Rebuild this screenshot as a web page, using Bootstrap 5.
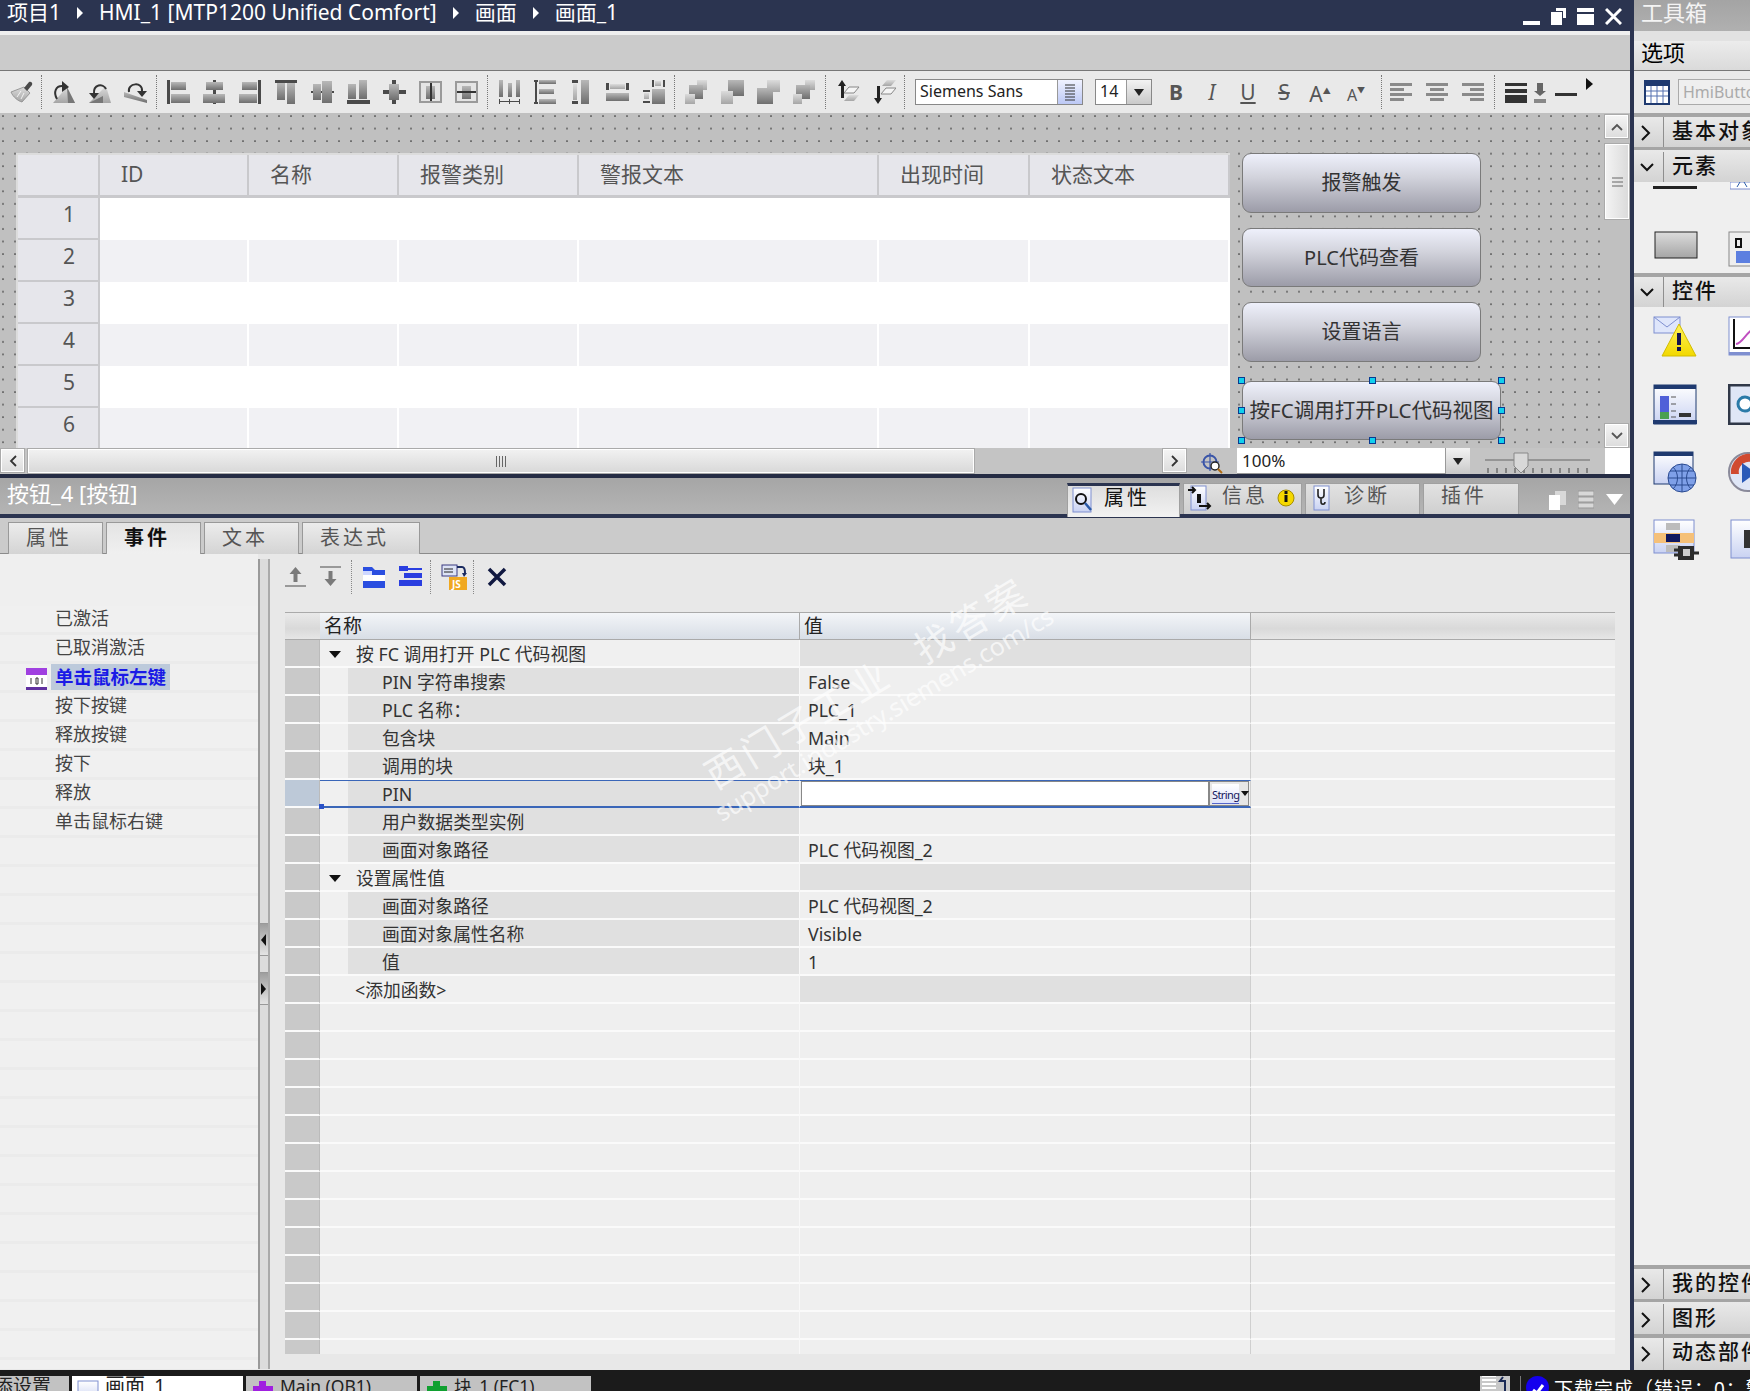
<!DOCTYPE html>
<html lang="en">
<head>
<meta charset="UTF-8">
<title>TIA Portal</title>
<link rel="stylesheet" href="https://cdn.jsdelivr.net/npm/bootstrap@5.3.0/dist/css/bootstrap.min.css">
<style>
:root { --navy: #2b3450; }
html, body { margin: 0; height: 100%; overflow: hidden; background: #e8e8e8; }
body, button, input { font-family: "Noto Sans", "Noto Sans CJK SC", sans-serif; color: #222; }
.app-wrap { width: 1750px; height: 1391px; }
.main-area { height: 1370px; }
.left-col { width: 1630px; }
.title-bar { height: 31px; background: var(--navy); color: #fff; font-size: 21px; line-height: 25px; padding: 0 0 6px 7px; flex: none; }
.crumb-arrow { width: 0; height: 0; border-left: 6px solid #fff; border-top: 6px solid transparent; border-bottom: 6px solid transparent; margin: 0 16px; }
.win-btns { margin-left: auto; padding-right: 8px; gap: 11px; padding-top: 6px; }
.menu-band { height: 40px; flex: none; background: #cbcbcb; border-top: 4px solid #efefef; border-bottom: 1px solid #777; }
.tool-row { height: 42px; flex: none; background: #e9e9e9; padding-left: 10px; }
.tool-row svg { flex: none; }
.tb-group { gap: 12px; }
.tb-sep { width: 1px; height: 34px; border-left: 1px dotted #777; margin: 0 10px 0 8px; flex: none; }
.sep-tight { margin: 0 8px 0 7px; }
.combo-box { height: 26px; background: #fff; border: 1px solid #888; font-size: 16px; line-height: 22px; padding-left: 4px; flex: none; }
.combo-font { width: 168px; }
.combo-size { width: 57px; margin-left: 12px; }
.combo-arrow { margin-left: auto; width: 25px; height: 24px; background: linear-gradient(#f3f3f3, #c9c9c9); border-left: 1px solid #999; }
.combo-list { background: linear-gradient(#f0f2ff, #bcc8f5); }
.arrow-down { width: 0; height: 0; border-top: 7px solid #222; border-left: 5px solid transparent; border-right: 5px solid transparent; }
.fmt-txt { width: 36px; text-align: center; font-size: 21px; line-height: 28px; color: #555; flex: none; }
.fmt-first { margin-left: 6px; }
.fmt-small { font-size: 16px; }
.fmt-arr { font-size: 8px; vertical-align: 8px; }
.canvas-row { height: 335px; flex: none; overflow: hidden; background: #c0c0c0; }
.canvas-dots { width: 1604px; padding: 40px 0 0 16px; gap: 12px;
  background-image: radial-gradient(circle at 1px 1px, #333 .5px, transparent .9px); background-size: 12px 12.55px; background-position: 2px 2px; }
.hmi-table { table-layout: fixed; border-collapse: separate; border-spacing: 0; width: 1214px; flex: none; align-self: flex-start; background: #fff; border-left: 2px solid #dcdcdc; border-top: 2px solid #dcdcdc; }
.hmi-table th { height: 43px; background: #e6e6eb; font-weight: 400; font-size: 21px; color: #555; padding: 0 0 0 21px; border-right: 2px solid #c9c9cc; border-bottom: 3px solid #c9c9cc; }
.hmi-table td { height: 42px; padding: 0; background: #fff; }
.hmi-table tr.alt td { background: #f1f1f4; border-right: 2px solid #fff; }
.hmi-table td.row-no, .hmi-table tr.alt td.row-no { background: #e6e6eb; color: #555; font-size: 21px; text-align: center; padding: 0 0 6px 22px; border-right: 2px solid #c9c9cc; border-bottom: 2px solid #c9c9cc; }
.hmi-btns { width: 262px; flex: none; }
.hmi-btn { width: 239px; height: 60px; padding: 0; margin-bottom: 15px; background: linear-gradient(#eef0fb, #d2d3dc 40%, #9c9ca8); border: 1px solid #7a7a7a; border-radius: 9px; font-size: 20px; color: #333; }
.hmi-short { height: 59px; }
.hmi-sel { width: 259px; height: 59px; margin: 19px 0 0; position: relative; font-size: 20.5px; }
.sel-handle { position: absolute; width: 7px; height: 7px; background: #10d0ee; border: 1px solid #0a3a90; }
.hd-l { left: -5px; } .hd-c { left: 126px; } .hd-r { right: -5px; }
.hd-t { top: -5px; } .hd-m { top: 25px; } .hd-b { bottom: -5px; }
.v-scroll { width: 26px; margin-left: auto; flex: none; padding-top: 1px; background: #c0c0c0; }
.scroll-btn { width: 25px; height: 25px; background: linear-gradient(#f5f5f5, #dcdcdc); border: 1px solid #aaa; outline: 1px solid #fff; outline-offset: -2px; flex: none; }
.v-thumb { height: 77px; margin-top: 4px; background: linear-gradient(90deg, #f4f4f4, #dadada); border: 1px solid #aaa; outline: 1px solid #fff; outline-offset: -2px; }
.h-bar { height: 26px; flex: none; background: #c4c4c4; }
.h-thumb { width: 948px; margin-left: 2px; background: linear-gradient(#f2f2f2, #d8d8d8); border: 1px solid #aaa; outline: 1px solid #fff; outline-offset: -2px; }
.grip-lines { width: 10px; height: 11px; background: repeating-linear-gradient(90deg, #666 0 1px, transparent 1px 3px); }
.mag-ic { margin-left: 13px; flex: none; }
.zoom-combo { width: 233px; margin-left: 11px; flex: none; background: #fff; font-size: 17px; line-height: 26px; padding-left: 5px; border-bottom: 1px solid #999; }
.zoom-combo .combo-arrow { height: 26px; }
.zoom-slider { width: 105px; margin-left: 15px; flex: none; }
.corner-white { width: 25px; margin-left: 15px; flex: none; background: #fff; }
.panel-head { height: 44px; flex: none; border-top: 4px solid #252c44; border-bottom: 4px solid var(--navy); background: linear-gradient(#a6a6a6, #b4b4b4); color: #fff; font-size: 22px; line-height: 30px; padding-left: 7px; }
.ptab-row { margin-left: auto; margin-right: 7px; gap: 3px; height: 31px; margin-top: 5px; }
.ptab { height: 31px; background: linear-gradient(#e2e2e2, #cfcfcf); border: 1px solid #a0a0a0; border-bottom: 0; font-size: 20px; letter-spacing: 3px; color: #555; line-height: 24px; flex: none; padding-left: 3px; gap: 9px; white-space: nowrap; }
.ptab span, .ptab svg { flex: none; }
.ptab-on { width: 113px; height: 34px; background: linear-gradient(#dedede, #f2f2f2); border-top: 3px solid var(--navy); color: #111; position: relative; z-index: 2; }
.ptab-info { width: 119px; }
.ptab-diag { width: 115px; padding-left: 6px; gap: 12px; }
.ptab-plug { width: 96px; padding-left: 17px; }
.head-tools { gap: 12px; margin-left: 27px; margin-top: 2px; }
.sub-tabs { height: 36px; flex: none; background: #cbcbcb; border-bottom: 1px solid #8b8b8b; padding: 4px 0 0 8px; gap: 3px; }
.sub-tab { width: 95px; height: 32px; background: linear-gradient(#ececec, #d4d4d4); border: 1px solid #999; border-bottom: 0; padding-left: 17px; font-size: 20px; letter-spacing: 3px; line-height: 30px; color: #555; }
.sub-tab-on { height: 33px; background: linear-gradient(#e4e4e4, #f0f0f0); color: #111; font-weight: 700; position: relative; }
.sub-tab-wide { width: 118px; }
.props-body { height: 815px; }
.evt-list { width: 258px; flex: none; padding-top: 52px; background: repeating-linear-gradient(#f0f0f0 0 26px, #ebebeb 26px 29px); background-position: 0 52px; background-size: 100% 29px; background-repeat: repeat-y; position: relative; font-size: 18px; }
.evt-top { position: absolute; left: 0; right: 0; top: 0; height: 52px; background: #efefef; }
.evt-item { height: 29px; padding-left: 55px; line-height: 25px; color: #444; position: relative; }
.evt-on { padding-left: 26px; gap: 4px; color: #1a1ae6; font-weight: 700; }
.evt-on span { background: #bdcadb; padding: 0 4px; line-height: 26px; height: 26px; font-size: 18.500px; }
.splitter { width: 12px; flex: none; margin-top: 5px; background: #dcdcdc; border-left: 2px solid #9a9a9a; border-right: 2px solid #aaa; }
.split-knob { height: 33px; background: linear-gradient(#9e9e9e, #e4e4e4); border-top: 1px solid #999; border-bottom: 1px solid #999; }
.knob-one { margin-top: 364px; }
.knob-two { margin-top: 16px; }
.knob-left { width: 0; height: 0; border-right: 5px solid #111; border-top: 6px solid transparent; border-bottom: 6px solid transparent; margin-left: 1px; }
.knob-right { width: 0; height: 0; border-left: 5px solid #111; border-top: 6px solid transparent; border-bottom: 6px solid transparent; margin-left: 1px; }
.grid-side { padding-left: 15px; width: 1360px; }
.grid-tools { height: 58px; flex: none; padding-top: 8px; padding-bottom: 20px; }
.grid-tools svg { flex: none; }
.grid-sep { width: 1px; height: 34px; border-left: 1px dotted #888; flex: none; }
.gap-14 { margin-left: 14px; } .gap-10 { margin-left: 10px; } .gap-12 { margin-left: 12px; } .gap-8 { margin-left: 8px; } .gap-6 { margin-left: 6px; } .gap-13 { margin-left: 13px; }
.grid-wrap { width: 1330px; height: 742px; flex: none; overflow: hidden; }
.prop-grid { table-layout: fixed; width: 1330px; border-collapse: separate; border-spacing: 0; font-size: 17.800px; color: #333; }
.prop-grid th { height: 28px; padding: 0 0 0 4px; font-weight: 400; font-size: 19px; line-height: 24px; background: linear-gradient(#f3f5f8, #d8dee6); border-top: 1px solid #aaa; border-bottom: 1px solid #aaa; border-right: 1px solid #aaa; color: #222; }
.prop-grid th.grey-head { background: linear-gradient(#e9e9e9, #d9d9d9 60%, #e6e6e6); border-right: 0; }
.prop-grid td { height: 28px; padding: 1px 0 0; border-bottom: 2px solid #fafafa; background: #efefef; line-height: 24px; white-space: nowrap; }
.prop-grid td.r-head { background: #c9c9c9; border-right: 1px solid #bbb; }
.prop-grid td.c-name { padding-left: 62px; background: linear-gradient(90deg, #f0f0f0 28px, #e0e0e0 28px); border-right: 1px solid #f8f8f8; }
.prop-grid td.c-val { padding-left: 8px; border-right: 1px solid #cfcfcf; }
.prop-grid td.c-rest { background: #eeeeee; }
.prop-grid tr.group td.c-name { background: #f0f0f0; padding-left: 9px; }
.prop-grid tr.group td.c-val { background: #e0e0e0; }
.prop-grid tr.blank td.c-name { background: #efefef; }
.prop-grid td.c-name .tri { display: inline-block; width: 0; height: 0; border-top: 7px solid #111; border-left: 6px solid transparent; border-right: 6px solid transparent; margin: 0 15px 3px 0; }
.prop-grid tr.add-row td.c-name { padding-left: 35px; }
.prop-grid tr.pin-row td.r-head { background: #bdc9d8; }
.prop-grid tr.pin-row td.c-name, .prop-grid tr.pin-row td.c-val { border-top: 1px solid #3a66b8; border-bottom: 2px solid #3a66b8; padding-top: 0; position: relative; }
.prop-grid tr.pin-row td.c-val { padding: 0 1px; background: #efefef; }
.pin-box { height: 25px; gap: 0; }
.pin-input { flex: 1; border: 1px solid #888; height: 25px; background: #fff; padding: 0; outline: 0; }
.type-btn { width: 40px; height: 25px; border: 1px solid #888; background: #e6e6e6; font-size: 11px; letter-spacing: -.6px; line-height: 22px; color: #14145a; padding-left: 2px; gap: 2px; }
.type-btn span { background: linear-gradient(#fff, #dfe4fb); border-bottom: 1px solid #5566cc; height: 20px; }
.arrow-small { width: 0; height: 0; border-top: 5px solid #111; border-left: 4px solid transparent; border-right: 4px solid transparent; }
.pin-mark { position: absolute; width: 5px; height: 5px; background: #2a52c8; left: -1px; bottom: -3px; }
.water-mark { position: absolute; transform: translate(-50%, -50%) rotate(-31deg); color: rgba(255, 255, 255, .68); white-space: nowrap; pointer-events: none; z-index: 5; }
.wm-one { left: 798px; top: 724px; font-size: 38px; letter-spacing: 4px; }
.wm-two { left: 971px; top: 620px; font-size: 38px; letter-spacing: 4px; }
.wm-three { left: 884px; top: 714px; font-size: 25px; }
.right-col { width: 120px; flex: none; border-left: 4px solid var(--navy); background: #efefef; overflow: hidden; }
.rp-title { height: 31px; flex: none; background: linear-gradient(#a4a4a4, #b0b0b0); color: #f4f4f4; font-size: 22px; line-height: 24px; padding-left: 7px; white-space: nowrap; }
.rp-gap { height: 10px; flex: none; background: #e2e2e2; }
.rp-opts { height: 30px; flex: none; background: linear-gradient(#ececec, #dadada); border-bottom: 1px solid #777; font-size: 22px; line-height: 22px; padding-left: 7px; color: #000; }
.rp-tools { height: 42px; flex: none; background: #e9e9e9; padding-left: 10px; gap: 8px; }
.rp-tools svg { flex: none; }
.rp-input { width: 120px; height: 26px; flex: none; border: 1px solid #aaa; font-size: 16px; color: #aaa; line-height: 24px; padding-left: 4px; background: #efefef; }
.acc-row { height: 34px; flex: none; background: linear-gradient(#e9e9e9, #d3d3d3); border-top: 4px solid #a5a5a5; font-size: 21px; font-weight: 500; line-height: 26px; color: #111; white-space: nowrap; letter-spacing: 2px; }
.acc-mid { height: 35px; border-top-width: 3px; padding-top: 2px; }
.acc-last { height: 36px; }
.acc-chev { width: 30px; flex: none; border-right: 1px solid #8e8e8e; padding-left: 6px; }
.acc-label { padding-left: 8px; }
.rp-pane { background: #efefef; overflow: hidden; flex: none; }
.pane-elem { height: 91px; }
.pane-ctrl { height: 958px; padding-top: 9px; }
.icon-rows { gap: 26px; padding-left: 19px; }
.icon-line { gap: 30px; }
.icon-line svg { flex: none; }
.pane-elem svg { flex: none; }
.pane-elem .elem-top { height: 8px; gap: 33px; padding-left: 19px; overflow: hidden; }
.pane-elem .elem-low { gap: 30px; padding: 41px 0 0 20px; }
.status-strip { height: 21px; flex: none; background: #1b1b1b; overflow: hidden; color: #fff; font-size: 17.500px; padding-top: 6px; }
.st-tab { width: 171px; height: 26px; flex: none; margin-right: 3px; background: #c2c2c2; color: #222; line-height: 20px; padding-left: 6px; gap: 6px; white-space: nowrap; }
.st-tab svg { flex: none; }
.st-first { width: 69px; padding-left: 0; justify-content: flex-end; padding-right: 18px; font-size: 19px; }
.st-on { background: #fff; font-size: 20px; padding-left: 5px; }
.st-right { margin-left: auto; width: 270px; height: 20px; gap: 5px; color: #fff; font-size: 19px; line-height: 26px; white-space: nowrap; overflow: hidden; letter-spacing: 1px; }
.st-pic { width: 30px; height: 16px; flex: none; background: #c8c8c8; margin-top: -1px; }
.st-div { width: 1px; height: 26px; background: #777; margin: -6px 0 0 5px; flex: none; }
.st-dot { width: 23px; height: 23px; border-radius: 50%; background: #1400ee; flex: none; }
</style>
</head>
<body>
<svg width="0" height="0" class="position-absolute">
  <defs>
    <linearGradient id="tg" x1="0" y1="0" x2="0" y2="1"><stop offset="0" stop-color="#b8b8b8"/><stop offset="1" stop-color="#6e6e6e"/></linearGradient>
    <linearGradient id="tg2" x1="0" y1="0" x2="0" y2="1"><stop offset="0" stop-color="#dcdcdc"/><stop offset="1" stop-color="#a5a5a5"/></linearGradient>
    <linearGradient id="pg" x1="0" y1="0" x2="0" y2="1"><stop offset="0" stop-color="#ffffff"/><stop offset="1" stop-color="#c9d2f2"/></linearGradient>
    <linearGradient id="yl" x1="0" y1="0" x2="0" y2="1"><stop offset="0" stop-color="#fff35a"/><stop offset="1" stop-color="#f2d800"/></linearGradient>
  </defs>
</svg>

<div class="app-wrap position-relative d-flex flex-column">
  <div class="main-area d-flex">
    <div class="left-col d-flex flex-column">

      <div class="title-bar d-flex align-items-center">
        <span>项目1</span><i class="crumb-arrow"></i><span>HMI_1 [MTP1200 Unified Comfort]</span><i class="crumb-arrow"></i><span>画面</span><i class="crumb-arrow"></i><span>画面_1</span>
        <div class="win-btns d-flex align-items-center">
          <svg width="17" height="18"><rect y="14" width="17" height="4" fill="#fff"/></svg>
          <svg width="15" height="18"><rect x="5" y="1" width="10" height="3" fill="#fff"/><rect x="12" y="1" width="3" height="10" fill="#fff"/><rect y="5" width="11" height="13" fill="#fff"/></svg>
          <svg width="17" height="18"><rect y="1" width="17" height="4" fill="#fff"/><rect y="7" width="17" height="11" fill="#fff"/></svg>
          <svg width="17" height="18"><path d="M1 2 L16 17 M16 2 L1 17" stroke="#fff" stroke-width="3"/></svg>
        </div>
      </div>
      <div class="menu-band"></div>

      <div class="tool-row d-flex align-items-center" id="toolRow">
        <div id="toolIcons" class="d-flex align-items-center"></div>
        <div class="tb-sep"></div>
        <div class="combo-box combo-font d-flex">Siemens Sans<div class="combo-arrow combo-list d-flex align-items-center justify-content-center"><svg width="12" height="17"><path d="M1 1h10M1 4h10M1 7h10M1 10h10M1 13h10M1 16h10" stroke="#333" stroke-width="1.2"/></svg></div></div>
        <div class="combo-box combo-size d-flex">14<div class="combo-arrow d-flex align-items-center justify-content-center"><i class="arrow-down"></i></div></div>
        <div class="fmt-txt fmt-first fw-bold">B</div>
        <div class="fmt-txt fst-italic">I</div>
        <div class="fmt-txt text-decoration-underline">U</div>
        <div class="fmt-txt text-decoration-line-through">S</div>
        <div class="fmt-txt">A<span class="fmt-arr">▲</span></div>
        <div class="fmt-txt fmt-small">A<span class="fmt-arr">▼</span></div>
        <div class="tb-sep sep-tight"></div>
        <div id="textAlign" class="d-flex tb-group"></div>
        <div class="tb-sep"></div>
        <svg width="24" height="24"><rect y="3" width="22" height="3" fill="#333"/><rect y="9" width="22" height="4" fill="#333"/><rect y="15" width="22" height="8" fill="#333"/></svg>
        <svg width="14" height="24" class="ms-1"><rect x="4" y="3" width="6" height="9" fill="#666"/><path d="M1 11h12l-6 5z" fill="#666"/><rect x="1" y="19" width="12" height="4" fill="#888"/></svg>
        <svg width="22" height="24" class="ms-2"><rect y="13" width="22" height="3" fill="#333"/></svg>
        <svg width="10" height="24" class="ms-2 mb-2"><path d="M1 2l7 6-7 6z" fill="#111"/></svg>
      </div>

      <div class="canvas-row d-flex">
        <div class="canvas-dots d-flex">
          <table class="hmi-table">
            <colgroup><col width="82"><col width="149"><col width="150"><col width="180"><col width="300"><col width="151"><col></colgroup>
            <thead><tr><th></th><th>ID</th><th>名称</th><th>报警类别</th><th>警报文本</th><th>出现时间</th><th>状态文本</th></tr></thead>
            <tbody id="hmiRows"></tbody>
          </table>
          <div class="hmi-btns">
            <button class="btn hmi-btn d-block">报警触发</button>
            <button class="btn hmi-btn hmi-short d-block">PLC代码查看</button>
            <button class="btn hmi-btn d-block">设置语言</button>
            <button class="btn hmi-btn hmi-sel d-block">按FC调用打开PLC代码视图
              <i class="sel-handle hd-l hd-t"></i><i class="sel-handle hd-c hd-t"></i><i class="sel-handle hd-r hd-t"></i>
              <i class="sel-handle hd-l hd-m"></i><i class="sel-handle hd-r hd-m"></i>
              <i class="sel-handle hd-l hd-b"></i><i class="sel-handle hd-c hd-b"></i><i class="sel-handle hd-r hd-b"></i>
            </button>
          </div>
        </div>
        <div class="v-scroll d-flex flex-column">
          <div class="scroll-btn d-flex align-items-center justify-content-center"><svg width="12" height="8"><path d="M1 7l5-5 5 5" fill="none" stroke="#555" stroke-width="1.8"/></svg></div>
          <div class="v-thumb d-flex align-items-center justify-content-center"><svg width="11" height="10"><path d="M0 1h11M0 5h11M0 9h11" stroke="#666"/></svg></div>
          <div class="flex-grow-1"></div>
          <div class="scroll-btn d-flex align-items-center justify-content-center"><svg width="12" height="8"><path d="M1 1l5 5 5-5" fill="none" stroke="#555" stroke-width="1.8"/></svg></div>
        </div>
      </div>

      <div class="h-bar d-flex">
        <div class="scroll-btn d-flex align-items-center justify-content-center"><svg width="8" height="12"><path d="M7 1L2 6l5 5" fill="none" stroke="#333" stroke-width="1.8"/></svg></div>
        <div class="h-thumb d-flex align-items-center justify-content-center"><i class="grip-lines"></i></div>
        <div class="scroll-btn d-flex align-items-center justify-content-center ms-auto"><svg width="8" height="12"><path d="M1 1l5 5-5 5" fill="none" stroke="#333" stroke-width="1.8"/></svg></div>
        <svg width="26" height="26" class="mag-ic"><circle cx="10" cy="14" r="6.5" fill="none" stroke="#3a55a8" stroke-width="2"/><path d="M10 5v18M1 14h18" stroke="#3a55a8" stroke-width="1.2"/><circle cx="15" cy="18" r="4" fill="#fff" stroke="#222" stroke-width="1.4"/><path d="M18 21l4 4" stroke="#b06a10" stroke-width="2"/></svg>
        <div class="zoom-combo d-flex">100%<div class="combo-arrow d-flex align-items-center justify-content-center"><i class="arrow-down"></i></div></div>
        <svg width="105" height="26" class="zoom-slider"><path d="M0 12h105" stroke="#666"/><path d="M3 20v5M12 20v5M21 20v5M30 20v5M39 20v5M48 20v5M57 20v5M66 20v5M75 20v5M84 20v5M93 20v5M102 20v5" stroke="#444"/><path d="M29 5h14v13l-7 7-7-7z" fill="#d8d8d8" stroke="#888"/></svg>
        <div class="corner-white"></div>
      </div>

      <div class="panel-head d-flex">
        <span>按钮_4 [按钮]</span>
        <div class="ptab-row d-flex">
          <div class="ptab ptab-on d-flex">
            <svg width="24" height="28"><rect x="2" y="2" width="18" height="24" fill="url(#pg)" stroke="#7f8fd0"/><circle cx="10" cy="13" r="5" fill="none" stroke="#111" stroke-width="2"/><path d="M14 17l6 7" stroke="#2a5aa8" stroke-width="2.5"/></svg>
            <span>属性</span>
          </div>
          <div class="ptab ptab-info d-flex">
            <svg width="26" height="28"><rect x="4" y="2" width="15" height="24" fill="url(#pg)" stroke="#7f8fd0"/><path d="M1 6h7M5 3l3 3-3 3M12 22h11M20 19l3 3-3 3" stroke="#111" stroke-width="2" fill="none"/><rect x="10" y="10" width="4" height="9" fill="#111"/></svg>
            <span>信息</span>
            <svg width="20" height="28"><circle cx="9" cy="14" r="8" fill="#f5d800" stroke="#a58d00"/><rect x="7.5" y="11" width="3" height="7" fill="#111"/><rect x="7.5" y="7" width="3" height="3" fill="#111"/></svg>
          </div>
          <div class="ptab ptab-diag d-flex">
            <svg width="20" height="28"><rect x="2" y="2" width="15" height="24" fill="url(#pg)" stroke="#7f8fd0"/><path d="M6 5v6c0 4 6 4 6 0V5M9 14v4c0 3 4 3 4 0" fill="none" stroke="#222" stroke-width="1.6"/></svg>
            <span>诊断</span>
          </div>
          <div class="ptab ptab-plug d-flex"><span>插件</span></div>
          <div class="head-tools d-flex align-items-center">
            <svg width="17" height="20"><rect x="6" y="1" width="11" height="14" fill="#d8d8d8"/><rect y="5" width="11" height="15" fill="#fff"/></svg>
            <svg width="16" height="20"><rect y="1" width="16" height="5" fill="#d8d8d8" stroke="#999"/><rect y="7" width="16" height="5" fill="#d8d8d8" stroke="#999"/><rect y="13" width="16" height="5" fill="#d8d8d8" stroke="#999"/></svg>
            <svg width="17" height="12"><path d="M0 0h17l-8.500 11z" fill="#fff"/></svg>
          </div>
        </div>
      </div>

      <div class="sub-tabs d-flex">
        <div class="sub-tab">属性</div>
        <div class="sub-tab sub-tab-on">事件</div>
        <div class="sub-tab">文本</div>
        <div class="sub-tab sub-tab-wide">表达式</div>
      </div>

      <div class="props-body d-flex">
        <div class="evt-list">
          <div class="evt-top"></div>
          <div class="evt-item">已激活</div>
          <div class="evt-item">已取消激活</div>
          <div class="evt-item evt-on d-flex">
            <svg width="21" height="22" class="mt-1"><rect width="21" height="22" fill="#fff"/><rect width="21" height="7" fill="#a040e0"/><rect y="19" width="21" height="3" fill="#6030a0"/><path d="M5 10v6M10 10h2v6h-2zM16 10v6" stroke="#333" fill="none"/></svg>
            <span>单击鼠标左键</span>
          </div>
          <div class="evt-item">按下按键</div>
          <div class="evt-item">释放按键</div>
          <div class="evt-item">按下</div>
          <div class="evt-item">释放</div>
          <div class="evt-item">单击鼠标右键</div>
        </div>
        <div class="splitter">
          <div class="split-knob knob-one d-flex align-items-center"><i class="knob-left"></i></div>
          <div class="split-knob knob-two d-flex align-items-center"><i class="knob-right"></i></div>
        </div>
        <div class="grid-side d-flex flex-column">
          <div class="grid-tools d-flex align-items-center">
            <svg width="21" height="26"><path d="M10.500 3l6 7h-4v8h-4v-8h-4z" fill="#7a7a7a"/><rect y="21" width="21" height="2" fill="#999"/></svg>
            <svg width="21" height="26" class="gap-14"><rect y="2" width="21" height="2" fill="#999"/><path d="M8.500 7h4v8h4l-6 7-6-7h4z" fill="#7a7a7a"/></svg>
            <div class="grid-sep gap-10"></div>
            <svg width="24" height="26" class="gap-10"><path d="M1 3h9l3 3h10v18H1z" fill="#2a4ee0"/><rect x="1" y="11" width="22" height="6" fill="#fff"/><rect x="1" y="7" width="9" height="4" fill="#cfd8ff"/></svg>
            <svg width="24" height="26" class="gap-12"><path d="M1 2h9v5H1zM6 9h18v5H6zM1 16h23v6H1z" fill="#2a3ee0"/><path d="M10 4h14v2H10z" fill="#2a3ee0"/></svg>
            <div class="grid-sep gap-8"></div>
            <svg width="26" height="28" class="gap-10"><rect x="1" y="2" width="15" height="11" fill="#dde3f5" stroke="#3a3a80"/><path d="M3 6h9M3 9h9" stroke="#222"/><path d="M16 4h5c3 0 3 3 3 6" fill="none" stroke="#1a2a60" stroke-width="2"/><path d="M21 10h5l-3 4z" fill="#1a2a60"/><rect x="8" y="14" width="18" height="13" fill="#f0a820"/><text x="11" y="25" font-size="10" font-weight="700" fill="#fff">JS</text></svg>
            <div class="grid-sep gap-6"></div>
            <svg width="20" height="22" class="gap-13"><path d="M2 3l16 16M18 3L2 19" stroke="#101840" stroke-width="3.500"/></svg>
          </div>
          <div class="grid-wrap">
            <table class="prop-grid">
              <colgroup><col width="35"><col width="480"><col width="451"><col></colgroup>
              <thead><tr><th class="grey-head"></th><th>名称</th><th>值</th><th class="grey-head"></th></tr></thead>
              <tbody id="propRows"></tbody>
            </table>
          </div>
        </div>
      </div>
    </div>

    <div class="right-col d-flex flex-column">
      <div class="rp-title">工具箱</div>
      <div class="rp-gap"></div>
      <div class="rp-opts">选项</div>
      <div class="rp-tools d-flex align-items-center">
        <svg width="26" height="26"><rect x="1" y="2" width="24" height="23" fill="#fff" stroke="#1f3a70" stroke-width="2"/><rect x="1" y="2" width="24" height="5" fill="#1f3a70"/><path d="M7 7v17M13 7v17M19 7v17M2 12h22M2 17h22" stroke="#5570b0"/></svg>
        <div class="rp-input">HmiButton</div>
      </div>
      <div class="acc-row d-flex"><div class="acc-chev"><svg width="12" height="24"><path d="M2 6l7 7-7 7" fill="none" stroke="#111" stroke-width="2"/></svg></div><div class="acc-label">基本对象</div></div>
      <div class="acc-row acc-mid d-flex"><div class="acc-chev"><svg width="16" height="24"><path d="M1 9l6 6 6-6" fill="none" stroke="#111" stroke-width="2"/></svg></div><div class="acc-label">元素</div></div>
      <div class="rp-pane pane-elem">
        <div class="elem-top d-flex">
          <svg width="44" height="8"><rect y="4" width="44" height="3" fill="#222"/></svg>
          <svg width="40" height="8"><rect width="30" height="7" fill="#fff" stroke="#7f8fd0"/><path d="M10 0l-3 5M14 0l3 5" stroke="#2a5aa8"/></svg>
        </div>
        <div class="elem-low d-flex">
          <svg width="44" height="28"><rect x="1" y="1" width="42" height="26" fill="url(#tg2)" stroke="#222"/></svg>
          <svg width="40" height="36"><rect x="1" y="1" width="30" height="34" fill="#eee" stroke="#888"/><rect x="8" y="8" width="5" height="8" fill="none" stroke="#111" stroke-width="2"/><rect x="8" y="20" width="22" height="12" fill="#5c7fe0"/></svg>
        </div>
      </div>
      <div class="acc-row d-flex"><div class="acc-chev"><svg width="16" height="24"><path d="M1 9l6 6 6-6" fill="none" stroke="#111" stroke-width="2"/></svg></div><div class="acc-label">控件</div></div>
      <div class="rp-pane pane-ctrl">
        <div class="icon-rows d-flex flex-column">
          <div class="icon-line d-flex">
            <svg width="45" height="42"><rect x="1" y="1" width="26" height="16" fill="#dfe6fb" stroke="#7f8fd0"/><path d="M1 1l13 10L27 1" fill="none" stroke="#7f8fd0"/><path d="M26 8l17 32H9z" fill="url(#yl)" stroke="#d2bc00"/><rect x="24" y="17" width="4" height="12" fill="#141450"/><rect x="24" y="31" width="4" height="4" fill="#141450"/></svg>
            <svg width="40" height="40"><rect x="1" y="1" width="38" height="38" fill="#fff" stroke="#7f8fd0"/><path d="M6 3v29h33" fill="none" stroke="#111" stroke-width="2"/><path d="M8 28c8-1 10-15 26-20" fill="none" stroke="#c050c0" stroke-width="2"/><rect x="1" y="36" width="38" height="3" fill="#7f8fd0"/></svg>
          </div>
          <div class="icon-line d-flex">
            <svg width="45" height="41"><rect x="1" y="1" width="42" height="39" fill="url(#pg)" stroke="#1f3a70"/><rect x="1" y="1" width="42" height="4" fill="#1f3a70"/><rect y="36" width="44" height="4" fill="#1f3a70"/><rect x="7" y="12" width="9" height="16" fill="#5060d8"/><rect x="7" y="28" width="9" height="7" fill="#4aa050"/><path d="M18 13h5M18 20h5M18 27h5M18 33h5" stroke="#555"/><rect x="26" y="29" width="12" height="4" fill="#333"/></svg>
            <svg width="40" height="41"><rect x="1" y="1" width="38" height="39" fill="#dfe6f6" stroke="#303848" stroke-width="3"/><circle cx="17" cy="20" r="7" fill="#fff" stroke="#2a7aa8" stroke-width="3"/></svg>
          </div>
          <div class="icon-line d-flex">
            <svg width="45" height="42"><rect x="1" y="1" width="39" height="32" fill="url(#pg)" stroke="#1f3a70"/><rect x="1" y="1" width="39" height="4" fill="#1f3a70"/><circle cx="29" cy="27" r="14" fill="#7fa0e8" stroke="#2a4a90"/><path d="M15 27h28M29 13v28M20 16c6 6 6 16 0 22M38 16c-6 6-6 16 0 22M17 20h24M17 34h24" stroke="#2a4a90" fill="none"/></svg>
            <svg width="40" height="42"><circle cx="20" cy="21" r="19" fill="#dfe6f6" stroke="#8a8a9a" stroke-width="2"/><path d="M3 23a18 18 0 0 1 20-20v8a10 10 0 0 0-12 12z" fill="#d04a30"/><path d="M14 12l14 10-14 10z" fill="#2a5ab8"/></svg>
          </div>
          <div class="icon-line d-flex">
            <svg width="47" height="42"><rect x="1" y="1" width="40" height="33" fill="url(#pg)" stroke="#7f8fd0"/><rect x="1" y="14" width="40" height="10" fill="#f5c078"/><rect x="13" y="4" width="14" height="7" fill="#bcbcbc"/><rect x="13" y="15" width="14" height="8" fill="#101860"/><rect x="13" y="26" width="14" height="7" fill="#bcbcbc"/><rect x="25" y="27" width="16" height="14" fill="#2c2c2c"/><rect x="30" y="30" width="7" height="7" fill="#ccc"/><path d="M21 31h4M21 36h4M41 34h5" stroke="#2c2c2c" stroke-width="3"/></svg>
            <svg width="40" height="41"><rect x="1" y="1" width="38" height="38" fill="url(#pg)" stroke="#7f8fd0"/><rect x="14" y="11" width="24" height="18" fill="#333"/></svg>
          </div>
        </div>
      </div>
      <div class="acc-row d-flex"><div class="acc-chev"><svg width="12" height="24"><path d="M2 6l7 7-7 7" fill="none" stroke="#111" stroke-width="2"/></svg></div><div class="acc-label">我的控件</div></div>
      <div class="acc-row acc-mid d-flex"><div class="acc-chev"><svg width="12" height="24"><path d="M2 6l7 7-7 7" fill="none" stroke="#111" stroke-width="2"/></svg></div><div class="acc-label">图形</div></div>
      <div class="acc-row acc-last d-flex"><div class="acc-chev"><svg width="12" height="24"><path d="M2 6l7 7-7 7" fill="none" stroke="#111" stroke-width="2"/></svg></div><div class="acc-label">动态部件</div></div>
    </div>
  </div>

  <div class="status-strip d-flex">
    <div class="st-tab st-first d-flex">添设置</div>
    <div class="st-tab st-on d-flex"><svg width="22" height="22" class="mt-1"><rect x="1" y="1" width="20" height="20" fill="url(#pg)" stroke="#7f8fd0"/></svg>画面_1</div>
    <div class="st-tab d-flex"><svg width="22" height="18" class="mt-1"><path d="M1 6h6V1h7v5h7v7H1z" fill="#a020e0"/></svg>Main (OB1)</div>
    <div class="st-tab d-flex"><svg width="22" height="18" class="mt-1"><path d="M1 6h6V1h7v5h7v7H1z" fill="#10a030"/></svg>块_1 (FC1)</div>
    <div class="st-right d-flex">
      <div class="st-pic d-flex"><svg width="30" height="16"><path d="M2 1h14M2 5h14M2 9h14M2 13h14" stroke="#fff" stroke-width="2"/><path d="M25 16V6h-5l3-4" fill="none" stroke="#1b2a55" stroke-width="2"/></svg></div>
      <div class="st-div"></div>
      <div class="st-dot d-flex"><svg width="23" height="23"><path d="M7 14l4 3 6-8" stroke="#fff" stroke-width="3" fill="none"/></svg></div>
      <span>下载完成（错误：0；警告</span>
    </div>
  </div>

  <div class="water-mark wm-one">西门子工业</div>
  <div class="water-mark wm-two">找答案</div>
  <div class="water-mark wm-three">support.industry.siemens.com/cs</div>
</div>

<script src="https://cdn.jsdelivr.net/npm/bootstrap@5.3.0/dist/js/bootstrap.bundle.min.js"></script>
<script>
// small toolbar pictures, each is a list of rects x,y,w,h,fill
const G = 'url(#tg)', L = 'url(#tg2)', D = '#4a4a4a';
function svgRects(list, w) {
    let out = `<svg width="${w || 24}" height="24">`;
    list.forEach(r => { out += `<rect x="${r[0]}" y="${r[1]}" width="${r[2]}" height="${r[3]}" fill="${r[4]}"/>`; });
    return out + '</svg>';
}
const sep = '<div class="tb-sep"></div>';
const brush = '<svg width="23" height="24"><path d="M14 7l6 6-8 9C8 21 3 17 1 12z" fill="url(#tg2)" stroke="#888" stroke-width=".8"/><path d="M14 8l5-6c2-1 4 1 3 3l-5 6z" fill="#4a4a4a"/><path d="M11 11l-4 6M14 13l-3 6" stroke="#fff" stroke-width=".8"/></svg>';
const turn = [
    '<svg width="24" height="24"><path d="M15 7L1 23h22z" fill="url(#tg2)"/><path d="M15 7l8 16h-7z" fill="#777"/><path d="M5 19C1 12 4 6 10 6" fill="none" stroke="#333" stroke-width="2"/><path d="M10 1l7 6-7 5z" fill="#333"/></svg>',
    '<svg width="24" height="24"><path d="M18 6L1 23h22z" fill="url(#tg2)"/><path d="M1 23l14-7v7z" fill="#777"/><path d="M18 9C15 3 5 4 6 14" fill="none" stroke="#333" stroke-width="2"/><path d="M1 13h10l-5 6z" fill="#333"/></svg>',
    '<svg width="24" height="24"><path d="M0 12l23 8v3L0 17z" fill="url(#tg)"/><path d="M5 12C3 3 19 1 18 11" fill="none" stroke="#333" stroke-width="2"/><path d="M13 11h10l-5 6z" fill="#333"/></svg>'
];
const aligns = [
    [[0, 0, 3, 24, D], [4, 2, 15, 8, G], [4, 14, 19, 9, G]],
    [[10, 0, 3, 24, D], [3, 2, 17, 8, G], [0, 14, 22, 9, G]],
    [[19, 0, 3, 24, D], [3, 2, 15, 8, G], [0, 14, 18, 9, G]],
    [[0, 0, 22, 3, D], [2, 3, 8, 17, G], [12, 3, 8, 21, G]],
    [[0, 11, 23, 2, D], [2, 4, 8, 16, G], [11, 1, 10, 22, G]],
    [[0, 20, 23, 4, D], [1, 4, 8, 15, G], [12, 0, 8, 19, G]],
    [[9, 0, 4, 24, D], [0, 10, 23, 4, D], [6, 4, 10, 16, G]],
    [[0, 1, 23, 22, '#9a9a9a'], [2, 3, 19, 18, '#e4e4e4'], [7, 6, 9, 13, G], [11, 3, 2, 18, '#333']],
    [[0, 1, 23, 22, '#9a9a9a'], [2, 3, 19, 18, '#e4e4e4'], [7, 6, 9, 13, G], [2, 11, 19, 2, '#333']]
];
const dist = [
    [[1, 0, 4, 17, G], [10, 3, 4, 14, G], [18, 0, 4, 17, G], [1, 21, 21, 1, D], [1, 19, 1, 5, D], [11, 19, 1, 5, D], [21, 19, 1, 5, D]],
    [[1, 1, 2, 22, D], [0, 0, 4, 2, D], [0, 22, 4, 2, D], [5, 0, 17, 4, G], [5, 9, 15, 5, G], [5, 19, 17, 5, G]],
    [[3, 4, 4, 16, L], [2, 0, 6, 3, D], [2, 21, 6, 3, D], [11, 0, 8, 24, G]],
    [[4, 4, 15, 5, L], [0, 3, 3, 7, D], [20, 3, 3, 7, D], [0, 13, 23, 8, G]],
    [[10, 9, 13, 15, G], [13, 1, 6, 5, L], [10, 0, 2, 7, D], [21, 0, 2, 7, D], [2, 13, 5, 6, L], [1, 10, 7, 2, D], [1, 21, 7, 2, D]]
];
const orders = [
    [[12, 0, 10, 10, L], [4, 5, 14, 14, G], [0, 14, 10, 10, L]],
    [[7, 0, 16, 16, G], [0, 11, 12, 13, L]],
    [[0, 8, 16, 16, G], [10, 0, 13, 12, L]],
    [[12, 0, 10, 10, L], [3, 5, 14, 14, G], [0, 14, 9, 10, L]]
];
const shift = [
    '<svg width="24" height="24"><path d="M6 0l4 6H8v12H5V6H2z" fill="#222"/><path d="M13 7h10l-5 6H8z" fill="#f5f5f5" stroke="#888"/><path d="M13 15h10l-5 6H8z" fill="url(#tg2)"/></svg>',
    '<svg width="24" height="24"><path d="M6 24l4-6H8V6H5v12H2z" fill="#222"/><path d="M15 0h9l-5 6h-9z" fill="url(#tg2)"/><path d="M14 8h10l-5 6H9z" fill="#f5f5f5" stroke="#888"/></svg>'
];
let html = brush + sep + '<div class="d-flex tb-group">' + turn.join('') + '</div>' + sep;
html += '<div class="d-flex tb-group">' + aligns.map(a => svgRects(a)).join('') + '</div>' + sep;
html += '<div class="d-flex tb-group">' + dist.map(a => svgRects(a)).join('') + '</div>' + sep;
html += '<div class="d-flex tb-group">' + orders.map(a => svgRects(a)).join('') + '</div>' + sep;
html += '<div class="d-flex tb-group">' + shift.join('') + '</div>';
document.getElementById('toolIcons').innerHTML = html;

const bars = [[[0, 3, 22, 3], [0, 8, 14, 3], [0, 13, 22, 3], [0, 18, 14, 3]], [[0, 3, 22, 3], [4, 8, 14, 3], [0, 13, 22, 3], [4, 18, 14, 3]], [[0, 3, 22, 3], [8, 8, 14, 3], [0, 13, 22, 3], [8, 18, 14, 3]]];
document.getElementById('textAlign').innerHTML = bars.map(b => svgRects(b.map(r => r.concat('#8a8a8a')))).join('');

// HMI alarm table rows
const hmi = document.getElementById('hmiRows');
for (let i = 1; i <= 7; i++) {
    let cells = '<td class="row-no">' + i + '</td>';
    for (let c = 0; c < 6; c++) cells += '<td></td>';
    hmi.insertAdjacentHTML('beforeend', `<tr class="${i % 2 ? '' : 'alt'}">${cells}</tr>`);
}

// event property rows
const rows = [
    { g: 1, n: '按 FC 调用打开 PLC 代码视图', v: '' },
    { n: 'PIN 字符串搜索', v: 'False' },
    { n: 'PLC 名称：', v: 'PLC_1' },
    { n: '包含块', v: 'Main' },
    { n: '调用的块', v: '块_1' },
    { pin: 1, n: 'PIN' },
    { n: '用户数据类型实例', v: '' },
    { n: '画面对象路径', v: 'PLC 代码视图_2' },
    { g: 1, n: '设置属性值', v: '' },
    { n: '画面对象路径', v: 'PLC 代码视图_2' },
    { n: '画面对象属性名称', v: 'Visible' },
    { n: '值', v: '1' },
    { add: 1, n: '&lt;添加函数&gt;', v: '' }
];
const body = document.getElementById('propRows');
rows.forEach(r => {
    let cls = r.g ? 'group' : r.add ? 'group add-row' : r.pin ? 'pin-row' : '';
    let name = (r.g ? '<i class="tri"></i>' : '') + r.n + (r.pin ? '<i class="pin-mark"></i>' : '');
    let val = r.pin
        ? '<div class="pin-box d-flex"><input class="pin-input" type="text"><div class="type-btn d-flex align-items-center"><span>String</span><i class="arrow-small"></i></div></div>'
        : r.v;
    body.insertAdjacentHTML('beforeend', `<tr class="${cls}"><td class="r-head"></td><td class="c-name">${name}</td><td class="c-val">${val}</td><td class="c-rest"></td></tr>`);
});
for (let i = 0; i < 13; i++) {
    body.insertAdjacentHTML('beforeend', '<tr class="blank"><td class="r-head"></td><td class="c-name"></td><td class="c-val"></td><td class="c-rest"></td></tr>');
}
</script>
</body>
</html>
